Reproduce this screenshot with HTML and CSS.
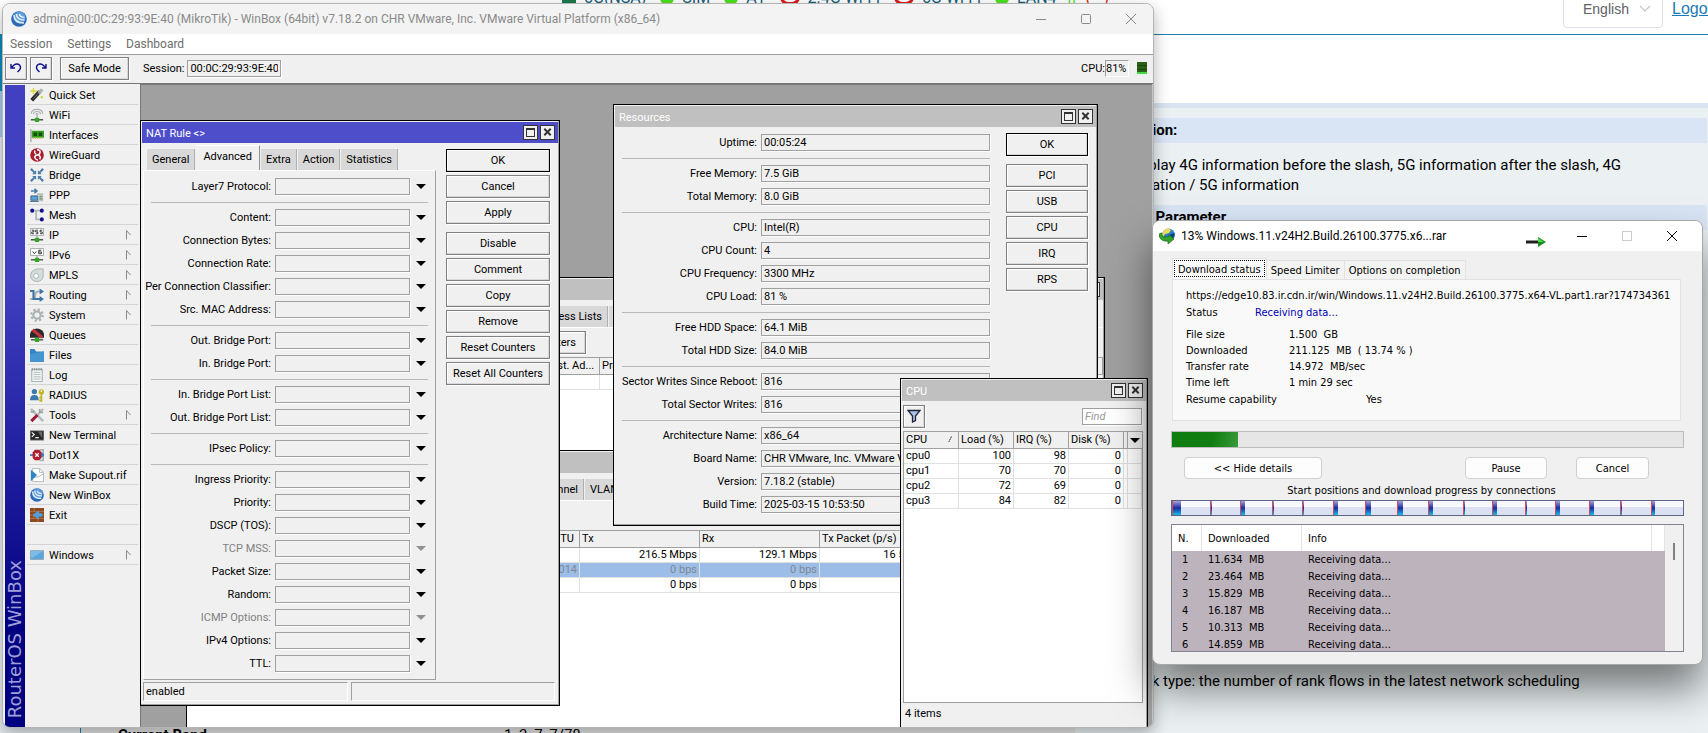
FILE: index.html
```
<!DOCTYPE html>
<html lang="en">
<head>
  <meta charset="UTF-8" />
  <meta name="viewport" content="width=device-width, initial-scale=1" />
  <title>WinBox</title>
  <link rel="stylesheet" href="styles.css">
</head>
<body>
  <div class="router-page">
    <header class="router-header">
      <div class="radio-status">
        <span class="bars"></span><span>5G(NSA)</span>
        <span class="dot"></span><span>SIM</span>
        <span class="dot"></span><span>A1</span>
        <span class="wave"></span><span>2.4G Wi-Fi</span>
        <span class="wave"></span><span>5G Wi-Fi</span>
        <span class="dot"></span><span>LAN4</span>
        <span class="up">⇈</span><span class="down">(···)</span>
      </div>
      <button class="lang">English
        <svg width="12" height="8" viewBox="0 0 12 8"><path d="M1 1l5 5 5-5" fill="none" stroke="#c0c4cc" stroke-width="1.2"/></svg>
      </button>
      <a class="logout" href="#">Logout</a>
    </header>
    <div class="router-body">
      <nav class="router-nav"><div class="nav-head"></div><div class="nav-active"></div></nav>
      <main class="router-content"><strong>Current Band</strong><span>1, 3, 7, 7/78</span></main>
      <aside class="help">
        <div class="help-line"></div>
        <h2>Information:</h2>
        <p>To display 4G information before the slash, 5G information after the slash, 4G<br>information / 5G information</p>
        <h2>The Parameter</h2>
        <p class="rank">Rank type: the number of rank flows in the latest network scheduling</p>
      </aside>
    </div>
  </div>

  <section class="winbox">
    <div class="titlebar">
      <svg class="app-icon" viewBox="0 0 16 16"><use href="#i-winbox"/></svg>
      <span class="caption">admin@00:0C:29:93:9E:40 (MikroTik) - WinBox (64bit) v7.18.2 on CHR VMware, Inc. VMware Virtual Platform (x86_64)</span>
      <button aria-label="Minimize"><svg viewBox="0 0 12 12"><path d="M1 6.500h10"/></svg></button>
      <button aria-label="Maximize"><svg viewBox="0 0 12 12"><rect x="1.500" y="1.500" width="9" height="9" rx="1"/></svg></button>
      <button aria-label="Close"><svg viewBox="0 0 12 12"><path d="M1 1l10 10M11 1L1 11"/></svg></button>
    </div>
    <div class="menubar">
      <button>Session</button><button>Settings</button><button>Dashboard</button>
    </div>
    <div class="toolbar">
      <button class="btn tool" aria-label="Undo"><svg viewBox="0 0 12 10"><path d="M1 1v4h4M1.500 4.500L4 2q3-2 5.500 0 2 2.500 0 5l-2 2"/></svg></button>
      <button class="btn tool" aria-label="Redo"><svg viewBox="0 0 12 10"><path d="M11 1v4H7M10.500 4.500L8 2Q5 0 2.500 2q-2 2.500 0 5l2 2"/></svg></button>
      <button class="btn safe">Safe Mode</button>
      <label for="session">Session:</label>
      <input class="field session" id="session" value="00:0C:29:93:9E:40" readonly>
      <div class="cpu-meter">CPU:<span>81%</span><i></i></div>
    </div>
    <div class="workspace">
      <div class="brand"><span>RouterOS WinBox</span></div>
      <nav class="side" id="side"></nav>

      <div class="mdi">
        <div class="win firewall">
          <div class="win-title"><span></span><button class="wbtn max" aria-label="Maximize"></button><button class="wbtn close" aria-label="Close"></button></div>
          <div class="tabs bg-tabs">
            <div class="push"><button class="tab">Address Lists</button></div>
            <button class="tab">Layer7 Protocols</button>
          </div>
          <div class="bg-bar"><button class="btn">Counters</button></div>
          <table class="list">
            <colgroup><col class="c-fw"><col class="c-dst"><col></colgroup>
            <tr><th></th><th>Dst. Ad...</th><th>Protocol</th></tr>
            <tr><td></td><td></td><td></td></tr>
          </table>
        </div>

        <div class="win interfaces">
          <div class="win-title"><span></span></div>
          <div class="tabs bg-tabs">
            <div class="push"><button class="tab">IP Tunnel</button></div>
            <button class="tab">VLAN</button>
          </div>
          <div class="bg-bar"></div>
          <table class="list">
            <colgroup><col class="c-if"><col class="c-mtu"><col class="c-rate"><col class="c-rate"><col class="c-pkt"><col></colgroup>
            <tr><th></th><th>L2 MTU</th><th>Tx</th><th>Rx</th><th>Tx Packet (p/s)</th><th></th></tr>
            <tr><td></td><td></td><td>216.5 Mbps</td><td>129.1 Mbps</td><td>16 540</td><td></td></tr>
            <tr class="picked"><td></td><td>1014</td><td>0 bps</td><td>0 bps</td><td></td><td></td></tr>
            <tr><td></td><td></td><td>0 bps</td><td>0 bps</td><td></td><td></td></tr>
          </table>
        </div>

        <div class="win resources">
          <div class="win-title"><span>Resources</span><button class="wbtn max" aria-label="Maximize"></button><button class="wbtn close" aria-label="Close"></button></div>
          <div class="win-body">
            <div class="form" id="resources"></div>
            <div class="actions">
              <button class="btn default">OK</button>
              <button class="btn first">PCI</button>
              <button class="btn">USB</button>
              <button class="btn">CPU</button>
              <button class="btn">IRQ</button>
              <button class="btn">RPS</button>
            </div>
          </div>
        </div>

        <div class="win nat active">
          <div class="win-title"><span>NAT Rule &lt;&gt;</span><button class="wbtn max" aria-label="Maximize"></button><button class="wbtn close" aria-label="Close"></button></div>
          <div class="win-body">
            <div class="pages">
              <div class="tabs">
                <button class="tab">General</button><button class="tab on">Advanced</button><button class="tab">Extra</button><button class="tab">Action</button><button class="tab">Statistics</button>
              </div>
              <div class="form panel" id="nat"></div>
            </div>
            <div class="actions">
              <button class="btn default">OK</button>
              <button class="btn">Cancel</button>
              <button class="btn">Apply</button>
              <button class="btn first">Disable</button>
              <button class="btn">Comment</button>
              <button class="btn">Copy</button>
              <button class="btn">Remove</button>
              <button class="btn">Reset Counters</button>
              <button class="btn">Reset All Counters</button>
            </div>
          </div>
          <div class="status"><span>enabled</span><span></span></div>
        </div>

        <div class="win cpu">
          <div class="win-title"><span>CPU</span><button class="wbtn max" aria-label="Maximize"></button><button class="wbtn close" aria-label="Close"></button></div>
          <div class="cpu-bar">
            <button class="btn tool" aria-label="Filter"><svg viewBox="0 0 14 14"><path d="M1 1.500h12L8.500 7v4.500l-3 1.500V7z" fill="#a8c4e8" stroke="#223" stroke-width="1.300"/></svg></button>
            <input class="field find" placeholder="Find" aria-label="Find">
          </div>
          <div class="list-box">
            <table class="list">
              <colgroup><col class="c-cpu"><col class="c-cpu"><col class="c-cpu"><col class="c-cpu"><col class="c-gap"><col></colgroup>
              <thead><tr><th>CPU <i class="sort"></i></th><th>Load (%)</th><th>IRQ (%)</th><th>Disk (%)</th><th></th><th><i class="arrow"></i></th></tr></thead>
              <tbody id="cpuRows"></tbody>
            </table>
          </div>
          <div class="items">4 items</div>
        </div>
      </div>
    </div>
  </section>

  <section class="idm">
    <div class="titlebar">
      <svg class="app-icon" viewBox="0 0 16 16">
        <circle cx="9.500" cy="7" r="6.500" fill="#2f7fc4"/><path d="M5 2q4-3 7 0l-2 3-4 1-2 3-1-3z" fill="#e8dc62"/><path d="M10 7l5-2q1 4-3 7z" fill="#123c7c"/>
        <path d="M0 7q0-2 3-2-1 4 3 4l4-.500V6.500l5 4.500-6 5v-3Q1 14 0 7z" fill="#34a52c" stroke="#175c14" stroke-width=".600"/>
      </svg>
      <span class="caption">13% Windows.11.v24H2.Build.26100.3775.x6...rar</span>
      <svg class="go" viewBox="0 0 20 10"><path d="M0 3.500h12v3H0z" fill="#222"/><path d="M12 0l8 5-8 5z" fill="#1f8a1f"/><path d="M12 1l6 4h-6z" fill="#3fe03f"/></svg>
      <button aria-label="Minimize"><svg viewBox="0 0 12 12"><path d="M1 6.500h10"/></svg></button>
      <button aria-label="Maximize" disabled><svg viewBox="0 0 12 12"><rect x="1.500" y="1.500" width="9" height="9"/></svg></button>
      <button aria-label="Close"><svg viewBox="0 0 12 12"><path d="M1 1l10 10M11 1L1 11"/></svg></button>
    </div>
    <div class="idm-body">
      <div class="idm-tabs">
        <button class="on">Download status</button><button>Speed Limiter</button><button>Options on completion</button>
      </div>
      <div class="idm-panel">
        <div class="url">https://edge10.83.ir.cdn.ir/win/Windows.11.v24H2.Build.26100.3775.x64-VL.part1.rar?1747343611</div>
        <dl>
          <div class="state"><dt>Status</dt><dd>Receiving data...</dd></div>
          <div><dt>File size</dt><dd>1.500&nbsp; GB</dd></div>
          <div><dt>Downloaded</dt><dd>211.125&nbsp; MB&nbsp; ( 13.74 % )</dd></div>
          <div><dt>Transfer rate</dt><dd>14.972&nbsp; MB/sec</dd></div>
          <div><dt>Time left</dt><dd>1 min 29 sec</dd></div>
          <div class="resume"><dt>Resume capability</dt><dd>Yes</dd></div>
        </dl>
      </div>
      <div class="progress"><i></i></div>
      <div class="idm-buttons">
        <button class="hide">&lt;&lt; Hide details</button>
        <button class="pause">Pause</button>
        <button class="cancel">Cancel</button>
      </div>
      <div class="seg-label">Start positions and download progress by connections</div>
      <div class="segments" id="segments"></div>
      <div class="parts">
        <table>
          <colgroup><col class="c-n"><col class="c-dl"><col><col class="c-end"></colgroup>
          <thead><tr><th>N.</th><th>Downloaded</th><th>Info</th><th></th></tr></thead>
          <tbody id="parts"></tbody>
        </table>
        <div class="scroll"><i></i></div>
      </div>
    </div>
  </section>

  <svg class="sprite">
    <symbol id="i-quick" viewBox="0 0 16 16"><path d="M2 14L11 4" stroke="#2b2b2b" stroke-width="4.500"/><path d="M10 6l4-4.500" stroke="#b4b4b4" stroke-width="4"/><path d="M4 12l7-7.500" stroke="#777" stroke-width="1"/><path d="M4 0v7M.500 3.500h7M12 10.500h3M13.500 9v3" stroke="#d8d83a" stroke-width="1.700"/></symbol>
    <symbol id="i-wifi" viewBox="0 0 16 16"><g fill="none" stroke="#a9b3b3" stroke-width="1.300"><path d="M1.500 6.500q0-5 6.500-5t6.500 5M4 7q0-3 4-3t4 3M6.500 7.500Q8 5 9.500 7.500"/></g><path d="M8 7v6" stroke="#b4bcbc" stroke-width="2"/><path d="M1 13.500h14" stroke="#4b5555" stroke-width="1.600"/><rect x="5.500" y="11" width="5" height="5" rx="1" fill="#35a81f"/></symbol>
    <symbol id="i-card" viewBox="0 0 16 16"><path d="M1 1v15" stroke="#a9b3b3" stroke-width="1.700"/><path d="M2 3h14v8H2z" fill="#35a020"/><path d="M4 5h4v4H4zM10 5h4v4h-4z" fill="#14510c"/><path d="M3 11.500h12" stroke="#c0b840" stroke-width="1.500" stroke-dasharray="1.500 1"/></symbol>
    <symbol id="i-wg" viewBox="0 0 16 16"><circle cx="8" cy="8" r="7.800" fill="#a81c2c"/><path d="M8 2q4 0 3.500 3T8 8Q5 9 5.500 11T9 14M10 8q3 2 1 5M6 3q-2 2 1 4" fill="none" stroke="#fff" stroke-width="1.700"/></symbol>
    <symbol id="i-bridge" viewBox="0 0 16 16"><g fill="#4e7ea8"><path d="M7 7H2.500L4 5.500 0 2l2-2 3.500 4L7 2.500z"/><path d="M9 7V2.500L10.500 4 14 0l2 2-4 3.500L13.500 7z"/><path d="M7 9v4.500L5.500 12 2 16l-2-2 4-3.500L2.500 9z"/><path d="M9 9h4.500L12 10.500l4 3.500-2 2-3.500-4L9 13.500z"/></g></symbol>
    <symbol id="i-ppp" viewBox="0 0 16 16"><path d="M1 3.500h6M5 1l3 2.500L5 6" stroke="#4a7ba8" stroke-width="1.800" fill="none"/><path d="M1 9h8v5H1z" fill="#5aa0d8" stroke="#32607f"/><path d="M8 6h7v9H10V8H8z" fill="#b8c0c0"/><path d="M11 10h3M11 12.500h3" stroke="#5e8d3a"/><path d="M0 15.500h10" stroke="#32607f"/></symbol>
    <symbol id="i-mesh" viewBox="0 0 16 16"><path d="M3 3h10M7 3v10h6" fill="none" stroke="#b0b8b8" stroke-width="2"/><g fill="#10108c"><circle cx="2.500" cy="3" r="2.300"/><circle cx="13.500" cy="3" r="2.300"/><circle cx="13.500" cy="13" r="2.300"/></g></symbol>
    <symbol id="i-ip" viewBox="0 0 16 16"><path d="M.500 .500h15v8H.500z" fill="#fff" stroke="#98a2a2"/><path d="M2 2.500h2.500v2H2v2h2.500M9 2.500H6.500v2H9v2H6.500M14 2.500h-2.500v2H14v2h-2.500" fill="none" stroke="#222"/><path d="M8 9v4" stroke="#b4bcbc" stroke-width="2"/><path d="M1 13.500h14" stroke="#4b5555" stroke-width="1.600"/><rect x="5.500" y="11" width="5" height="5" rx="1" fill="#35a81f"/></symbol>
    <symbol id="i-ipv6" viewBox="0 0 16 16"><path d="M.500 .500h15v8H.500z" fill="#fff" stroke="#98a2a2"/><path d="M3 4l2 2.500L7 4M13 2.500h-3v4h3v-2h-3" fill="none" stroke="#222"/><path d="M8 9v4" stroke="#b4bcbc" stroke-width="2"/><path d="M1 13.500h14" stroke="#4b5555" stroke-width="1.600"/><rect x="5.500" y="11" width="5" height="5" rx="1" fill="#35a81f"/></symbol>
    <symbol id="i-mpls" viewBox="0 0 16 16"><path d="M15 1v9q-1 5-7 5.500Q1 15 .500 9 1 2 9 1z" fill="#d5dcdc" stroke="#a5afaf"/><circle cx="7" cy="9" r="2.800" fill="#fff" stroke="#a5afaf"/></symbol>
    <symbol id="i-routing" viewBox="0 0 16 16"><path d="M0 12.500h3q3 0 3-4T9 4h3" fill="none" stroke="#a9b3b3" stroke-width="2.200"/><path d="M0 3.500h4v9h8" fill="none" stroke="#3f74a3" stroke-width="2.400"/><path d="M11 .500L16 4l-5 3.500zM11 9l5 3.500-5 3.500z" fill="#3f74a3"/></symbol>
    <symbol id="i-system" viewBox="0 0 16 16"><circle cx="8" cy="8" r="6.500" fill="none" stroke="#a9b1b1" stroke-width="2.500" stroke-dasharray="2.500 2.600"/><circle cx="8" cy="8" r="4.200" fill="none" stroke="#a9b1b1" stroke-width="2.500"/></symbol>
    <symbol id="i-queues" viewBox="0 0 16 16"><path d="M0 11V7q1-6 8-6.500Q15 1 16 7v4z" fill="#2a2a2a"/><path d="M3 2l11 9" stroke="#c8323a" stroke-width="3.500"/><path d="M1 13.500h14" stroke="#4b5555" stroke-width="1.600"/><rect x="5.500" y="11" width="5" height="5" rx="1" fill="#35a81f"/></symbol>
    <symbol id="i-files" viewBox="0 0 16 16"><path d="M0 1h5l2 3h9v12H0z" fill="#3684c2"/><path d="M0 7l10-2 6-1v12H0z" fill="#4595d0"/></symbol>
    <symbol id="i-log" viewBox="0 0 16 16"><path d="M2 1.500h12v14H2z" fill="#f4f8f8" stroke="#a9b3b3" stroke-width="1.300"/><path d="M4 5h8M4 7.500h8M4 10h8M4 12.500h8" stroke="#a9b3b3"/><path d="M2 1.500h12" stroke="#8d9999" stroke-width="2.500" stroke-dasharray="1.500 1"/></symbol>
    <symbol id="i-radius" viewBox="0 0 16 16"><circle cx="5" cy="4" r="3" fill="#3b78ab"/><path d="M0 14q0-6 5-6t5 6z" fill="#3b78ab"/><circle cx="13" cy="4.500" r="3" fill="#c6b41c"/><path d="M13 7v9M13 11h-2.500M13 14h-2.500" stroke="#c6b41c" stroke-width="2"/><circle cx="13" cy="3.500" r="1" fill="#fff"/></symbol>
    <symbol id="i-tools" viewBox="0 0 16 16"><path d="M1 1l14 14" stroke="#b4bcbc" stroke-width="2.800"/><path d="M15 1L8.500 8" stroke="#b4bcbc" stroke-width="2.500"/><path d="M11 1v4h4M1 4q2 2 4-1" fill="none" stroke="#9aa4a4" stroke-width="1.800"/><path d="M8.500 8L1.500 15" stroke="#9c1836" stroke-width="3.500"/></symbol>
    <symbol id="i-term" viewBox="0 0 16 16"><path d="M0 3h16v11H0z" fill="#262626" stroke="#a0a8a8"/><path d="M14 4v8L9 4z" fill="#666"/><path d="M2 5l3 2.500L2 10M6 11h4" stroke="#fff" fill="none" stroke-width="1.200"/></symbol>
    <symbol id="i-dot1x" viewBox="0 0 16 16"><path d="M11 2h4v12h-4" fill="none" stroke="#a9b3b3" stroke-width="2"/><path d="M0 8h4M12 5.500L16 8l-4 2.500z" fill="#3f7fb8" stroke="#3f7fb8" stroke-width="2"/><path d="M5.500 2h5L13 5v6l-2.500 3h-5L3 11V5z" fill="#b51b2e"/><path d="M6 6l4 4M10 6l-4 4" stroke="#fff" stroke-width="1.500"/></symbol>
    <symbol id="i-supout" viewBox="0 0 16 16"><path d="M3 .500h8L15.500 5v10.500H3z" fill="#fff" stroke="#a9b3b3"/><path d="M11 .500V5h4.500M3 11q7 0 12-4" fill="none" stroke="#a9b3b3"/><path d="M1 2l7 6-7 7z" fill="#2f86c6"/></symbol>
    <symbol id="i-winbox" viewBox="0 0 16 16"><circle cx="8" cy="8" r="7.800" fill="#2c69b4"/><circle cx="8.500" cy="6.500" r="6" fill="#5c9bdc"/><path d="M3 4q0 8 10 8M5.500 3q0 6 8 6M8.500 3q0 3 5 3.500" fill="none" stroke="#e6f1fb" stroke-width="1.500"/></symbol>
    <symbol id="i-exit" viewBox="0 0 16 16"><path d="M0 0h16v16H0z" fill="#8b4a22"/><path d="M0 4h16M0 8h16M0 12h16M5 0v4M10 4v4M4 8v4M9 12v4" stroke="#b8713e"/><path d="M3 8l7-5.500V6h4v4h-4v3.500z" fill="#4fa0dc"/></symbol>
    <symbol id="i-windows" viewBox="0 0 16 16"><path d="M.500 3h15v10H.500z" fill="#5aa5dc" stroke="#8aa0b0"/><path d="M1 3.500h14L3 11H1z" fill="#7dbbe8"/></symbol>
  </svg>
  <script src="script.js"></script>
</body>
</html>
```
FILE: styles.css
```
* {
  box-sizing: border-box;
}
body {
  margin: 0;
  min-height: 100vh;
  position: relative;
  overflow: hidden;
  font-family: Roboto, "Liberation Sans", Arial, sans-serif;
  font-size: 11px;
  color: #000;
}
button, input {
  font: inherit;
  color: inherit;
}
button {
  padding: 0;
  border: none;
  background: none;
  white-space: nowrap;
}
.sprite {
  display: none;
}

/* router page behind the windows */
.router-page {
  min-height: 100vh;
  display: flex;
  flex-direction: column;
  background: #fff;
  font-size: 15px;
}
.router-header {
  height: 35px;
  padding-left: 562px;
  display: flex;
  align-items: flex-start;
  justify-content: space-between;
  border-bottom: 1px solid #1b7fa8;
}
.radio-status {
  display: flex;
  gap: 8px;
  margin-top: -12px;
  font-size: 16px;
  line-height: 20px;
  color: #17607c;
}
.radio-status span + .dot, .radio-status span + .wave {
  margin-left: 6px;
}
.dot, .wave, .bars {
  width: 14px;
  height: 17px;
  border-radius: 8px;
  background: #4be01f;
}
.wave {
  width: 20px;
  background: none;
  border: 3px solid #d81e1e;
}
.bars {
  border-radius: 0;
  background: #1c7a4c;
}
.up { color: #4be01f; }
.down { color: #d81e1e; }
.lang {
  margin-left: auto;
  width: 100px;
  height: 38px;
  margin-top: -10px;
  padding: 0 11px 0 19px;
  display: flex;
  align-items: center;
  justify-content: space-between;
  border: 1px solid #dcdfe6;
  border-radius: 4px;
  background: #fff;
  color: #606266;
  font-family: "Liberation Sans", Arial, sans-serif;
  font-size: 14px;
}
.logout {
  width: 45px;
  padding-left: 9px;
  font-family: "Liberation Sans", Arial, sans-serif;
  font-size: 16px;
  line-height: 18px;
  color: #1a7ab8;
}
.router-body {
  flex: 1;
  display: grid;
  grid-template-columns: 80px 995px 1fr;
}
.router-nav {
  background: #e9eef2;
}
.nav-head {
  height: 56px;
  background: #0d8cc0;
}
.nav-active {
  height: 46px;
  background: #a8cdf4;
}
.router-content {
  display: flex;
  align-items: flex-end;
  height: 709px;
  padding-left: 37px;
  border-left: 1px solid #1b7fa8;
  background: #e4e4e4;
}
.router-content strong {
  width: 386px;
}
.help {
  border-top: 68px solid #fff;
  background: #ebf1f3;
}
.help-line {
  height: 5px;
  margin-bottom: 10px;
  background: #d9e3f1;
}
.help h2 {
  margin: 0 1px 0 0;
  padding-left: 51px;
  font-size: 15px;
  line-height: 25px;
  background: #d9e5f5;
}
.help h2:first-of-type {
  padding-left: 19px;
}
.help p {
  margin: 0;
  padding: 12px 0 10px 33px;
  line-height: 20px;
  white-space: nowrap;
}
.help .rank {
  padding: 441px 0 0 51px;
}

/* shared title bar */
.titlebar {
  height: 30px;
  display: flex;
  align-items: center;
  flex: none;
}
.titlebar button {
  width: 45px;
  height: 28px;
}
.titlebar button svg {
  display: block;
  width: 12px;
  height: 12px;
  margin: auto;
  fill: none;
  stroke: currentColor;
}
.app-icon {
  width: 16px;
  height: 16px;
  margin: 0 6px 0 8px;
}
.caption {
  flex: 1;
  font-size: 12px;
  white-space: nowrap;
}

/* WinBox main window */
.winbox {
  position: absolute;
  left: 2px;
  top: 3px;
  width: 1152px;
  height: 725px;
  display: flex;
  flex-direction: column;
  overflow: hidden;
  border: 1px solid #b4b4b4;
  border-radius: 8px;
  background: #f0f0f0;
  box-shadow: 0 6px 16px rgba(0, 0, 0, .3);
}
.winbox .titlebar {
  background: #f3f3f3;
  color: #8a8a8a;
}
.menubar {
  height: 20px;
  flex: none;
  display: flex;
  gap: 15px;
  padding-left: 7px;
  background: #fff;
  color: #6e6e6e;
  font-size: 12px;
}
.toolbar {
  height: 30px;
  flex: none;
  display: flex;
  align-items: center;
  gap: 3px;
  padding: 0 6px 2px 2px;
  border-top: 1px solid #a0a0a0;
  border-bottom: 1px solid #777;
}
.btn {
  height: 23px;
  border: 1px solid #808080;
  background: #f0f0f0;
  box-shadow: inset -1px -1px #d8d8d8, inset 1px 1px #fff, 1px 1px #fff;
}
.btn.default {
  border-color: #000;
}
.tool {
  width: 22px;
  display: grid;
  place-items: center;
}
.tool svg {
  width: 12px;
  height: 10px;
  fill: none;
  stroke: #10108c;
  stroke-width: 1.4;
}
.safe {
  width: 69px;
  margin: 0 11px 0 5px;
}
.field {
  min-width: 0;
  height: 17px;
  padding: 0 2px;
  border: 1px solid #a0a0a0;
  border-radius: 0;
  background: #f0f0f0;
  box-shadow: 1px 1px #fff;
  outline: none;
}
.session {
  width: 94px;
}
.cpu-meter {
  margin-left: auto;
  display: flex;
  align-items: center;
}
.cpu-meter span {
  height: 17px;
  width: 24px;
  line-height: 15px;
  border: 1px solid;
  border-color: #a0a0a0 #fff #fff #a0a0a0;
}
.cpu-meter i {
  width: 10px;
  height: 12px;
  margin-left: 8px;
  border-bottom: 2px solid #47d847;
  background: repeating-linear-gradient(#2a5f16 0 3px, #1d4510 3px 4px);
}
.workspace {
  flex: 1;
  min-height: 0;
  display: flex;
}
.brand {
  width: 20px;
  margin: 1px 2px 0;
  display: flex;
  align-items: flex-end;
  justify-content: center;
  padding-bottom: 9px;
  background: linear-gradient(#4040c0 0 30%, #000080 85%);
}
.brand span {
  writing-mode: vertical-rl;
  transform: rotate(180deg);
  font-family: "DejaVu Sans", sans-serif;
  font-size: 18px;
  line-height: 20px;
  color: #a0a0d8;
  white-space: nowrap;
}
.side {
  width: 113px;
  padding: 1px 2px 0 0;
}
.side button {
  width: 100%;
  height: 20px;
  padding: 1px 7px 0 3px;
  display: flex;
  align-items: center;
  gap: 5px;
  border-bottom: 1px solid #d4d4d4;
  text-align: left;
}
.side .gap {
  height: 20px;
  border-bottom: 1px solid #d4d4d4;
}
.side svg {
  flex: none;
  width: 14px;
  height: 14px;
}
.side .sub {
  width: 5px;
  height: 10px;
  margin-left: auto;
}
.mdi {
  flex: 1;
  position: relative;
  overflow: hidden;
  border-right: 1px solid #c4c4c4;
  background: #a0a0a0;
  box-shadow: inset 1px 1px #777;
}

/* child windows */
.win {
  position: absolute;
  padding: 1px;
  border: 1px solid #000;
  background: #f0f0f0;
  box-shadow: inset -1px -1px #a0a0a0;
}
.win-title {
  height: 21px;
  flex: none;
  display: flex;
  align-items: center;
  gap: 2px;
  padding: 0 3px 1px 4px;
  background: #c0c0c0;
  color: #fff;
}
.win-title span {
  flex: 1;
  padding-top: 3px;
}
.active .win-title {
  background: #4e4ecb;
}
.wbtn {
  width: 15px;
  height: 15px;
  position: relative;
  border: 1px solid #333;
  background: #f0f0f0;
}
.max::before {
  content: "";
  position: absolute;
  inset: 2px;
  border: 1px solid #333;
  border-top-width: 2px;
}
.close::before, .close::after {
  content: "";
  position: absolute;
  left: 2px;
  top: 5px;
  width: 9px;
  height: 2px;
  background: #333;
  transform: rotate(45deg);
}
.close::after {
  transform: rotate(-45deg);
}
.win-body {
  display: flex;
}
.form {
  display: flex;
  flex-direction: column;
  gap: 6px;
}
.form hr {
  align-self: stretch;
  height: 1px;
  margin: 1px 0 0;
  border: none;
  background: #b8b8b8;
}
.row {
  display: flex;
  align-items: center;
  gap: 4px;
}
.row label {
  flex: none;
  text-align: right;
  line-height: 17px;
  white-space: nowrap;
}
.row .field {
  flex: 1;
}
.row.off {
  color: #808080;
}
.drop {
  width: 14px;
  height: 17px;
  display: grid;
  place-items: center;
}
.arrow, .drop i {
  display: block;
  border: 5px solid transparent;
  border-top-color: #000;
  border-bottom: none;
}
.off .drop i {
  border-top-color: #909090;
}
.actions {
  flex: none;
  display: flex;
  flex-direction: column;
  gap: 3px;
  padding: 6px 8px 0 0;
}
.actions .first {
  margin-top: 5px;
}
.tabs {
  display: flex;
  align-items: flex-end;
  gap: 1px;
  padding: 2px 4px 0;
}
.tab {
  height: 21px;
  padding: 0 5px;
  background: #d8d8d8;
  border-right: 1px solid #b0b0b0;
}
.tab.on {
  height: 25px;
  padding: 0 7px 4px;
  background: #f0f0f0;
  border-top: 1px solid #fff;
  border-right-color: #909090;
}
.nat {
  left: 0;
  top: 36px;
  width: 420px;
}
.pages {
  flex: 1;
  min-width: 0;
  margin: 0 10px 0 1px;
}
.panel {
  padding: 7px 7px 7px 1px;
  border: 1px solid;
  border-color: #fff #a0a0a0 #a0a0a0 #fff;
}
.nat .row label {
  width: 126px;
}
.nat .form hr {
  margin-left: 6px;
}
.nat .actions {
  width: 112px;
}
.status {
  display: flex;
  gap: 3px;
  padding: 2px 3px 3px 1px;
}
.status span {
  flex: 1;
  height: 19px;
  padding-left: 2px;
  line-height: 17px;
  border: 1px solid;
  border-color: #a0a0a0 #fff #fff #a0a0a0;
}
.resources {
  left: 473px;
  top: 20px;
  width: 485px;
}
.resources .form {
  flex: 1;
  min-width: 0;
  padding: 7px 16px 11px 7px;
}
.resources label {
  width: 135px;
}
.resources .actions {
  width: 90px;
}

/* lists */
.list {
  width: 100%;
  table-layout: fixed;
  border-collapse: separate;
  border-spacing: 0;
  background: #fff;
}
.list th, .list td {
  height: 15px;
  padding: 0 2px;
  line-height: 14px;
  font-weight: normal;
  text-align: right;
  white-space: nowrap;
  overflow: hidden;
  border-right: 1px solid #e0e0e0;
  border-bottom: 1px solid #e0e0e0;
}
.list th {
  height: 18px;
  text-align: left;
  background: #f0f0f0;
  border-color: #a0a0a0;
  border-top: 1px solid #a0a0a0;
}
.picked td {
  color: #808890;
  background: #9bbde8;
}
.firewall {
  left: 60px;
  top: 193px;
  width: 905px;
  height: 180px;
  background: linear-gradient(#f0f0f0 60%, #fff 60%);
}
.interfaces {
  left: 46px;
  top: 366px;
  width: 915px;
  bottom: -8px;
  background: linear-gradient(#f0f0f0 30%, #fff 30%);
}
.bg-tabs {
  padding: 6px 0 0;
  border-bottom: 1px solid #fff;
}
.push {
  display: flex;
  justify-content: flex-end;
  gap: 1px;
  width: 406px;
}
.interfaces .push {
  width: 396px;
}
.bg-bar {
  display: flex;
  justify-content: flex-end;
  width: 384px;
  height: 29px;
  padding: 3px 0;
}
.bg-bar .btn {
  padding: 0 9px;
}
.c-fw { width: 346px; }
.c-dst { width: 52px; }
.c-if { width: 346px; }
.c-mtu { width: 46px; }
.c-rate { width: 120px; }
.c-pkt { width: 100px; }
.cpu {
  left: 760px;
  top: 294px;
  width: 248px;
  bottom: -8px;
  display: flex;
  flex-direction: column;
}
.cpu-bar {
  height: 30px;
  display: flex;
  align-items: center;
  justify-content: space-between;
  padding: 0 4px 0 1px;
}
.cpu-bar svg {
  width: 14px;
  height: 14px;
}
.find {
  width: 60px;
  background: #fff;
}
.find::placeholder {
  color: #999;
  font-style: italic;
}
.list-box {
  flex: 1;
  margin: 0 3px 0 1px;
  border: 1px solid #a0a0a0;
  border-top: none;
  background: #fff;
}
.c-cpu { width: 55px; }
.c-gap { width: 4px; }
.cpu td:first-child {
  text-align: left;
}
.cpu th:last-child {
  border-right: none;
}
.sort {
  float: right;
  width: 6px;
  height: 6px;
  margin: 3px 3px 0 0;
  background: linear-gradient(120deg, transparent 45%, #909090 45% 60%, transparent 60%);
}
.items {
  height: 30px;
  padding: 4px 3px 0;
}

/* download window */
.idm {
  position: absolute;
  left: 1152px;
  top: 220px;
  width: 551px;
  overflow: hidden;
  border: 1px solid #a8a8a8;
  border-radius: 8px;
  background: #f0f0f0;
  font-family: "DejaVu Sans Condensed", "DejaVu Sans", Tahoma, sans-serif;
  font-size: 11px;
  box-shadow: 0 24px 40px rgba(0, 0, 0, .5);
}
.idm .titlebar {
  background: #fff;
}
.idm .caption {
  font-family: Roboto, sans-serif;
}
.idm .app-icon {
  margin-left: 6px;
}
.idm .titlebar button:disabled {
  color: #ccc;
}
.idm .titlebar button:last-child {
  margin-right: 8px;
}
.go {
  width: 20px;
  height: 10px;
  margin: 12px 13px 0 0;
}
.idm-body {
  padding: 7px 18px 12px 18px;
}
.idm-tabs {
  display: flex;
  align-items: flex-end;
  padding-left: 1px;
}
.idm-tabs button {
  height: 19px;
  padding: 0 4px;
  border: 1px solid #e2e2e2;
  border-left: none;
  border-bottom: none;
  background: #f3f3f3;
}
.idm-tabs .on {
  height: 21px;
  padding: 0 5px;
  border-left: 1px solid #e2e2e2;
  background: #f9f9f9;
  outline: 1px dotted #000;
  outline-offset: -3px;
}
.idm-panel {
  height: 142px;
  margin: 0 3px 0 1px;
  padding: 8px 10px 0 13px;
  border: 1px solid #e2e2e2;
  background: #f9f9f9;
}
.url {
  overflow: hidden;
  line-height: 16px;
  white-space: nowrap;
}
.idm dl {
  margin: 0;
  line-height: 16px;
}
.idm dl div {
  display: flex;
}
.idm dt {
  width: 103px;
}
.idm dd {
  margin: 0;
}
.idm dl .state {
  margin: 1px 0 6px;
}
.state dt {
  width: 69px;
}
.state dd {
  color: #0000b4;
}
.idm dl .resume {
  margin-top: 1px;
}
.resume dt {
  width: 180px;
}
.progress {
  height: 17px;
  margin-top: 10px;
  border: 1px solid #bcbcbc;
  background: #e6e6e6;
}
.progress i {
  display: block;
  width: 13%;
  height: 15px;
  background: linear-gradient(100deg, #0f7d10 60%, #3a9a3a);
}
.idm-buttons {
  display: flex;
  padding: 9px 35px 0 13px;
}
.idm-buttons button {
  width: 138px;
  height: 22px;
  border: 1px solid #d0d0d0;
  border-radius: 4px;
  background: #fdfdfd;
}
.idm-buttons .pause {
  width: 82px;
  margin: 0 29px 0 auto;
}
.idm-buttons .cancel {
  width: 73px;
}
.seg-label {
  margin-top: 3px;
  padding-right: 12px;
  text-align: center;
  line-height: 17px;
}
.segments {
  position: relative;
  height: 16px;
  margin-top: 1px;
  border: 1px solid #5c6488;
  background: linear-gradient(#f8f9ff 40%, #dbe0f2 45%);
}
.segments i {
  position: absolute;
  top: 0;
  bottom: 0;
  border-left: 1px solid #d84a5a;
  background: linear-gradient(#a8a0d8, #1c2ca0 50%, #10c0e8);
}
.parts {
  display: flex;
  height: 128px;
  margin-top: 8px;
  overflow: hidden;
  border: 1px solid #828290;
  background: #f0f0f0;
}
.parts table {
  flex: 1;
  table-layout: fixed;
  border-spacing: 0;
  background: #bdb3bc;
}
.parts th, .parts td {
  height: 17px;
  padding: 0 6px;
  text-align: left;
  font-weight: normal;
  white-space: nowrap;
}
.parts td:first-child {
  padding-left: 10px;
}
.parts th {
  height: 26px;
  background: #fff;
  border-right: 1px solid #e4e4e4;
}
.c-n { width: 30px; }
.c-dl { width: 100px; }
.c-end { width: 13px; }
.scroll {
  width: 18px;
  padding: 18px 8px;
}
.scroll i {
  display: block;
  width: 2px;
  height: 17px;
  background: #808080;
}
```
FILE: script.js
```
const menu = [
  ["quick", "Quick Set"], ["wifi", "WiFi"], ["card", "Interfaces"], ["wg", "WireGuard"],
  ["bridge", "Bridge"], ["ppp", "PPP"], ["mesh", "Mesh"], ["ip", "IP", true],
  ["ipv6", "IPv6", true], ["mpls", "MPLS", true], ["routing", "Routing", true],
  ["system", "System", true], ["queues", "Queues"], ["files", "Files"], ["log", "Log"],
  ["radius", "RADIUS"], ["tools", "Tools", true], ["term", "New Terminal"],
  ["dot1x", "Dot1X"], ["supout", "Make Supout.rif"], ["winbox", "New WinBox"],
  ["exit", "Exit"], null, ["windows", "Windows", true]
];

// null is a separator line, a leading "-" marks a disabled field
const natFields = [
  "Layer7 Protocol", null,
  "Content", "Connection Bytes", "Connection Rate", "Per Connection Classifier", "Src. MAC Address", null,
  "Out. Bridge Port", "In. Bridge Port", null,
  "In. Bridge Port List", "Out. Bridge Port List", null,
  "IPsec Policy", null,
  "Ingress Priority", "Priority", "DSCP (TOS)", "-TCP MSS", "Packet Size", "Random",
  "-ICMP Options", "IPv4 Options", "TTL"
];

const resources = [
  ["Uptime", "00:05:24"], null,
  ["Free Memory", "7.5 GiB"], ["Total Memory", "8.0 GiB"], null,
  ["CPU", "Intel(R)"], ["CPU Count", "4"], ["CPU Frequency", "3300 MHz"], ["CPU Load", "81 %"], null,
  ["Free HDD Space", "64.1 MiB"], ["Total HDD Size", "84.0 MiB"], null,
  ["Sector Writes Since Reboot", "816"], ["Total Sector Writes", "816"], null,
  ["Architecture Name", "x86_64"], ["Board Name", "CHR VMware, Inc. VMware Virtual Platform"],
  ["Version", "7.18.2 (stable)"], ["Build Time", "2025-03-15 10:53:50"]
];

const cpus = [[100, 98, 0], [70, 70, 0], [72, 69, 0], [84, 82, 0]];
const parts = ["11.634", "23.464", "15.829", "16.187", "10.313", "14.859"];

// start and width of every connection, in percent of the file
const segments = [
  [0, 1.8], [7.4, .4], [13.3, 1], [19.6, .4], [25.4, .4], [31.5, 1], [37.8, 1.1], [44, 1.2],
  [50.1, 1], [56.9, .5], [62.6, 1], [69.1, .4], [74.9, 1], [81.6, 1], [87.6, .5], [93.8, .8]
];

const fill = (id, html) => { document.getElementById(id).innerHTML = html; };

fill("side", menu.map(m => {
  if (!m) return '<div class="gap"></div>';
  const sub = m[2] ? '<svg class="sub" viewBox="0 0 5 10"><path d="M.5 9.500V.500L4.500 5" fill="none" stroke="#888"/></svg>' : "";
  return `<button><svg><use href="#i-${m[0]}"/></svg>${m[1]}${sub}</button>`;
}).join(""));

fill("nat", natFields.map((f, i) => {
  if (!f) return "<hr>";
  const off = f[0] === "-";
  const name = off ? f.slice(1) : f;
  return `<div class="row${off ? " off" : ""}"><label for="nat${i}">${name}:</label>
    <input class="field" id="nat${i}"${off ? " disabled" : ""}><button class="drop" aria-label="${name} list"><i></i></button></div>`;
}).join(""));

fill("resources", resources.map((r, i) => r
  ? `<div class="row"><label for="res${i}">${r[0]}:</label><input class="field" id="res${i}" value="${r[1]}" readonly></div>`
  : "<hr>").join(""));

fill("cpuRows", cpus.map((c, i) =>
  `<tr><td>cpu${i}</td><td>${c[0]}</td><td>${c[1]}</td><td>${c[2]}</td><td></td><td></td></tr>`).join(""));

fill("parts", parts.map((p, i) =>
  `<tr><td>${i + 1}</td><td>${p}&nbsp; MB</td><td>Receiving data...</td><td></td></tr>`).join(""));

fill("segments", segments.map(s => `<i style="left:${s[0]}%;width:${s[1]}%"></i>`).join(""));
```
